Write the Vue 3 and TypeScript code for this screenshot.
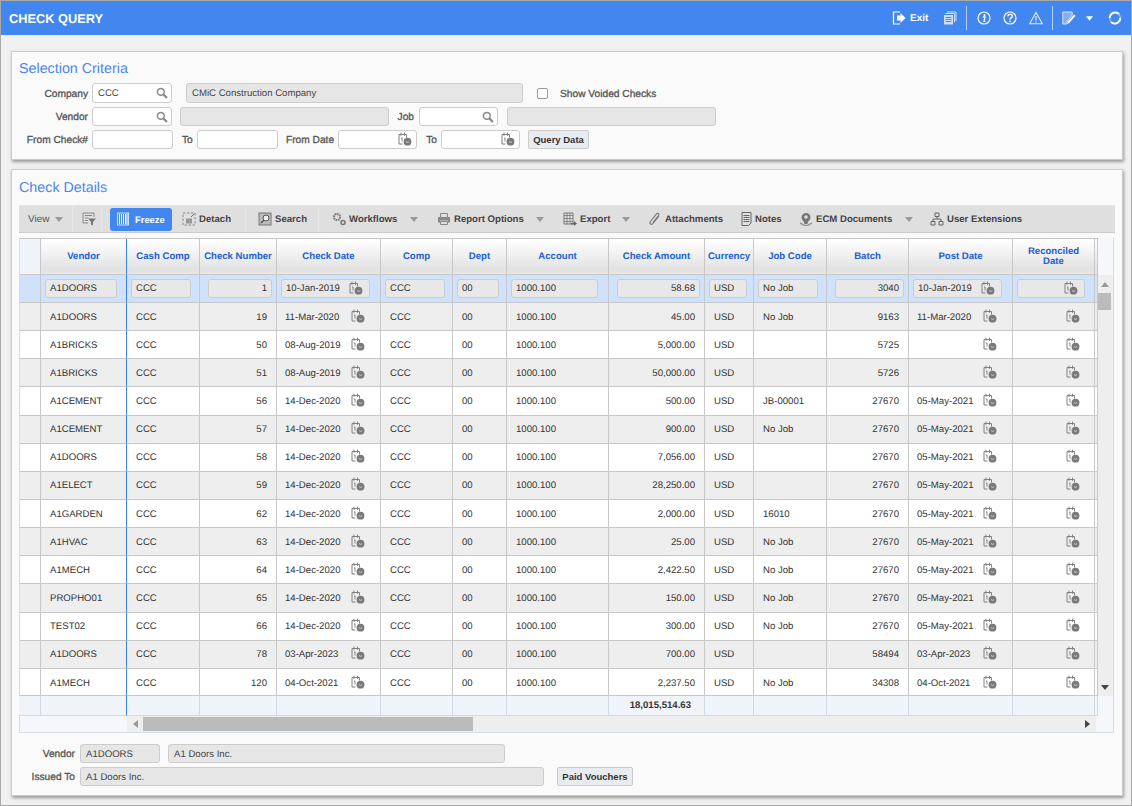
<script setup lang="ts">
interface Row {
  vendor: string
  num: string
  date: string
  amount: string
  job: string
  batch: string
  post: string
}

function mk(vendor: string, num: string, date: string, amount: string, job: string, batch: string, post: string): Row {
  return { vendor, num, date, amount, job, batch, post }
}

const D = '14-Dec-2020'
const P = '05-May-2021'
const first = mk('A1DOORS', '1', '10-Jan-2019', '58.68', 'No Job', '3040', '10-Jan-2019')
const rows: Row[] = [
  mk('A1DOORS', '19', '11-Mar-2020', '45.00', 'No Job', '9163', '11-Mar-2020'),
  mk('A1BRICKS', '50', '08-Aug-2019', '5,000.00', '', '5725', ''),
  mk('A1BRICKS', '51', '08-Aug-2019', '50,000.00', '', '5726', ''),
  mk('A1CEMENT', '56', D, '500.00', 'JB-00001', '27670', P),
  mk('A1CEMENT', '57', D, '900.00', 'No Job', '27670', P),
  mk('A1DOORS', '58', D, '7,056.00', '', '27670', P),
  mk('A1ELECT', '59', D, '28,250.00', '', '27670', P),
  mk('A1GARDEN', '62', D, '2,000.00', '16010', '27670', P),
  mk('A1HVAC', '63', D, '25.00', 'No Job', '27670', P),
  mk('A1MECH', '64', D, '2,422.50', 'No Job', '27670', P),
  mk('PROPHO01', '65', D, '150.00', 'No Job', '27670', P),
  mk('TEST02', '66', D, '300.00', 'No Job', '27670', P),
  mk('A1DOORS', '78', '03-Apr-2023', '700.00', '', '58494', '03-Apr-2023'),
  mk('A1MECH', '120', '04-Oct-2021', '2,237.50', 'No Job', '34308', '04-Oct-2021'),
]
const heads = ['Vendor', 'Cash Comp', 'Check Number', 'Check Date', 'Comp', 'Dept', 'Account', 'Check Amount', 'Currency', 'Job Code', 'Batch', 'Post Date']
const spacer = Array.from({ length: 15 }, (_, i) => i)
</script>

<template>
  <div class="page">
    <svg class="defs" width="0" height="0" aria-hidden="true">
      <symbol id="cal" viewBox="0 0 14 14">
        <path d="M1 2.500h7.500v3M1 2.500v9.500h3.500M3 .6v3.200M6.500 .6v3.200" fill="none" stroke="#808080" stroke-width="1"/>
        <path d="M3 6.400l1-.6v3.800" fill="none" stroke="#808080" stroke-width=".9"/>
        <circle cx="9.500" cy="9.700" r="3.900" fill="#7a7a7a"/>
        <path d="M8 9.500l1.600.9 1.500-.7" fill="none" stroke="#ddd" stroke-width=".8"/>
      </symbol>
      <symbol id="mag" viewBox="0 0 12 12">
        <circle cx="4.800" cy="4.800" r="3.400" fill="none" stroke="#8a8a8a" stroke-width="1.500"/>
        <path d="M7.400 7.400l3.600 3.600" stroke="#8a8a8a" stroke-width="2.200"/>
      </symbol>
      <symbol id="arrow" viewBox="0 0 8 5">
        <path d="M0 0h8L4 5z" fill="#999"/>
      </symbol>
    </svg>

    <header class="topbar">
      <span class="app-title">CHECK QUERY</span>
      <div class="top-actions">
        <svg class="ti" viewBox="0 0 14 14"><path d="M8 1H1.500v12H8" fill="none" stroke="#fff" stroke-width="1.200"/><path d="M5 4.500h3.500V2l5 5-5 5V9.500H5z" fill="#fff"/></svg>
        <span class="exit">Exit</span>
        <svg class="ti copy" viewBox="0 0 14 14"><path d="M4 1h9v9M2.500 2.500h9v9" fill="none" stroke="#cfe0fb" stroke-width="1"/><rect x="1" y="4" width="9" height="9.500" fill="#cfe0fb"/><path d="M2.500 6.500h6M2.500 8.500h6M2.500 10.500h6" stroke="#4287f0" stroke-width="1"/></svg>
        <i class="tsep first"></i>
        <svg class="ti info" viewBox="0 0 14 14"><circle cx="7" cy="7" r="6" fill="none" stroke="#fff" stroke-width="1.200"/><circle cx="7.500" cy="3.900" r="1" fill="#fff"/><path d="M5.800 6h2.200l-1 4.300h1.300" fill="none" stroke="#fff" stroke-width="1.300"/></svg>
        <svg class="ti help" viewBox="0 0 14 14"><circle cx="7" cy="7" r="6" fill="none" stroke="#fff" stroke-width="1.200"/><path d="M4.900 5.300c0-2.600 4.400-2.600 4.400-.1 0 1.700-2.300 1.700-2.300 3.300" fill="none" stroke="#fff" stroke-width="1.400"/><circle cx="7" cy="10.300" r=".9" fill="#fff"/></svg>
        <svg class="ti warn" viewBox="0 0 14 14"><path d="M7 1.500L13.300 12.800H.7z" fill="none" stroke="#e4eefc" stroke-width="1.100"/><path d="M7 5v4.500M7 10.300v1.300" stroke="#e4eefc" stroke-width="1.200"/></svg>
        <i class="tsep second"></i>
        <svg class="ti edit" viewBox="0 0 14 14"><path d="M.8 1h9.400v3L5 11v2H.8z" fill="#84aef4" stroke="#d5e4fb" stroke-width="1"/><path d="M5.500 13l.5-2.500 6-7 1.500 1.200-6 7z" fill="#fff"/></svg>
        <svg class="caret" viewBox="0 0 8 5"><path d="M0 0h8L4 5z" fill="#fff"/></svg>
        <svg class="ti sync" viewBox="0 0 14 14"><path d="M8.700 1.700A5.500 5.500 0 0 0 1.700 7M12.300 7a5.500 5.500 0 0 1-7 5.300M5.300 12.300A5.500 5.500 0 0 1 3 10.800M8.700 1.700A5.500 5.500 0 0 1 11 3.200" fill="none" stroke="#fff" stroke-width="2"/><path d="M12.300 7A5.500 5.500 0 0 0 11 3.300" fill="none" stroke="#a9c8f8" stroke-width="1.200"/><path d="M1.700 7A5.500 5.500 0 0 0 3 10.700" fill="none" stroke="#a9c8f8" stroke-width="1.200"/></svg>
      </div>
    </header>

    <main class="content">
      <section class="panel sel">
        <h2 class="ptitle">Selection Criteria</h2>
        <div class="frow tall">
          <label class="lb lead">Company</label>
          <div class="fld w80"><span>CCC</span><svg class="mag"><use href="#mag"/></svg></div>
          <div class="fld off w337 ml14"><span>CMiC Construction Company</span></div>
          <span class="check"></span>
          <label class="lb show">Show Voided Checks</label>
        </div>
        <div class="frow">
          <label class="lb lead">Vendor</label>
          <div class="fld w80"><span></span><svg class="mag"><use href="#mag"/></svg></div>
          <div class="fld off w209 ml8"></div>
          <label class="lb job">Job</label>
          <div class="fld w79 ml5"><span></span><svg class="mag"><use href="#mag"/></svg></div>
          <div class="fld off w209 ml9"></div>
        </div>
        <div class="frow">
          <label class="lb lead">From Check#</label>
          <div class="fld w81"></div>
          <label class="lb to1">To</label>
          <div class="fld w81 ml5"></div>
          <label class="lb fdate">From Date</label>
          <div class="fld w79 ml4"><span></span><svg class="cal"><use href="#cal"/></svg></div>
          <label class="lb to2">To</label>
          <div class="fld w79 ml4"><span></span><svg class="cal"><use href="#cal"/></svg></div>
          <button class="btn qd" type="button">Query Data</button>
        </div>
      </section>

      <section class="panel det">
        <h2 class="ptitle">Check Details</h2>
        <div class="toolbar">
          <div class="tb view">
            <span class="vtxt">View</span><svg class="tarrow"><use href="#arrow"/></svg>
          </div>
          <div class="tb filt">
            <svg class="tic" viewBox="0 0 14 14"><path d="M1 1h11v4M1 1v10h5M3 3.500h7M3 6h3M3 8.500h3" fill="none" stroke="#888"/><path d="M6 6.500h8l-3 3.500v3.500l-2-1V10z" fill="#777"/></svg>
          </div>
          <div class="freeze">
            <svg class="tic fz" viewBox="0 0 12 14"><rect x=".5" y="1" width="11" height="12" fill="none" stroke="#cfe0fb"/><path d="M2.500 2v10M4.500 2v10M6.500 2v10M8.500 2v10" stroke="#fff" stroke-width="1"/><path d="M10 1v12" stroke="#a9c8f8" stroke-width="2"/></svg>
            <span>Freeze</span>
          </div>
          <div class="tb detach">
            <svg class="tic" viewBox="0 0 14 14"><path d="M1 1h12v12H1z" fill="none" stroke="#888" stroke-dasharray="2.500 1.500"/><rect x="4" y="6.500" width="6" height="5" fill="#999"/><path d="M9 5l3-3" stroke="#777"/></svg>
            <span>Detach</span>
          </div>
          <div class="tb search">
            <svg class="tic" viewBox="0 0 14 14"><rect x="1" y="1" width="12" height="12" fill="#bbb" stroke="#777"/><circle cx="8" cy="6" r="3" fill="#eee" stroke="#555"/><path d="M5.800 8.200L3 11" stroke="#555" stroke-width="1.400"/></svg>
            <span>Search</span>
          </div>
          <div class="tb flow">
            <svg class="tic" viewBox="0 0 14 14"><circle cx="5" cy="5" r="3" fill="none" stroke="#777" stroke-width="2" stroke-dasharray="1.500 .8"/><circle cx="5" cy="5" r="3.800" fill="none" stroke="#999" stroke-width=".6"/><circle cx="11" cy="10.500" r="2" fill="none" stroke="#777" stroke-width="1.500"/></svg>
            <span>Workflows</span><svg class="tarrow wf"><use href="#arrow"/></svg>
          </div>
          <div class="tb report">
            <svg class="tic" viewBox="0 0 14 14"><path d="M3.500 5V1.500h7V5" fill="none" stroke="#888"/><path d="M1 5h12v5.500h-2V8.500H3v2H1z" fill="#888"/><path d="M3.500 9.500h7v3h-7z" fill="none" stroke="#888"/></svg>
            <span>Report Options</span><svg class="tarrow ro"><use href="#arrow"/></svg>
          </div>
          <div class="tb export">
            <svg class="tic" viewBox="0 0 14 14"><path d="M1 1h9v11H1z" fill="none" stroke="#777"/><path d="M1 3.500h9M4 1v11M7 1v11M1 6.500h9M1 9.500h9" stroke="#777" stroke-width=".8"/><path d="M8 11h3V9l3 2.500-3 2.500v-1.500H8z" fill="#666"/></svg>
            <span>Export</span><svg class="tarrow ex"><use href="#arrow"/></svg>
          </div>
          <div class="tb attach">
            <svg class="tic" viewBox="0 0 14 14"><path d="M11 4L5 11.500c-1.500 1.800-4 .2-2.800-1.800L8.500 1.800c1-1.200 3-.1 2.200 1.500L5 10.500" fill="none" stroke="#777" stroke-width="1.100"/></svg>
            <span>Attachments</span>
          </div>
          <div class="tb notes">
            <svg class="tic nt" viewBox="0 0 11 14"><path d="M1 .5h9v10.500l-2.500 2.500H1z" fill="none" stroke="#666"/><path d="M2.500 3.500h6M2.500 5.500h6M2.500 7.500h6M2.500 9.500h6" stroke="#666"/></svg>
            <span>Notes</span>
          </div>
          <div class="tb ecm">
            <svg class="tic" viewBox="0 0 14 14"><path d="M7 1a4.500 4.500 0 0 1 4.500 4.500C11.500 8 9 8.500 8.500 12h-3C5 8.500 2.500 8 2.500 5.500A4.500 4.500 0 0 1 7 1z" fill="#777"/><circle cx="7" cy="5" r="1.800" fill="#ddd"/><path d="M1 11l4.500 2.500h3L13 11" fill="none" stroke="#999" stroke-width="1.500"/></svg>
            <span>ECM Documents</span><svg class="tarrow em"><use href="#arrow"/></svg>
          </div>
          <div class="tb users">
            <svg class="tic" viewBox="0 0 14 14"><path d="M5 1h4v3.500H5zM1 9.500h4V13H1zM9 9.500h4V13H9z" fill="none" stroke="#666"/><path d="M7 4.500V7M3 9.500V7h8v2.500" fill="none" stroke="#666"/></svg>
            <span>User Extensions</span>
          </div>
        </div>

        <div class="table">
          <div class="grid-row head">
            <div class="c idx"></div>
            <div v-for="h in heads" :key="h" class="c hc">{{ h }}</div>
            <div class="c hc">Reconciled Date</div>
            <div class="c"></div>
          </div>

          <div class="body">
            <div class="rows">
              <div class="grid-row sel-row">
                <div class="c idx"></div>
                <div class="c"><div class="fi">{{ first.vendor }}</div></div>
                <div class="c"><div class="fi">CCC</div></div>
                <div class="c"><div class="fi num">{{ first.num }}</div></div>
                <div class="c"><div class="fi dt"><span>{{ first.date }}</span><svg class="cal"><use href="#cal"/></svg></div></div>
                <div class="c"><div class="fi">CCC</div></div>
                <div class="c"><div class="fi">00</div></div>
                <div class="c"><div class="fi">1000.100</div></div>
                <div class="c"><div class="fi num">{{ first.amount }}</div></div>
                <div class="c"><div class="fi">USD</div></div>
                <div class="c"><div class="fi">{{ first.job }}</div></div>
                <div class="c"><div class="fi num">{{ first.batch }}</div></div>
                <div class="c"><div class="fi dt"><span>{{ first.post }}</span><svg class="cal"><use href="#cal"/></svg></div></div>
                <div class="c"><div class="fi dt"><span></span><svg class="cal"><use href="#cal"/></svg></div></div>
                <div class="c"></div>
              </div>
              <div v-for="(r, i) in rows" :key="r.num" class="grid-row data" :class="{ alt: i % 2 === 0 }">
                <div class="c idx"></div>
                <div class="c txt">{{ r.vendor }}</div>
                <div class="c txt">CCC</div>
                <div class="c txt right">{{ r.num }}</div>
                <div class="c txt dc"><span>{{ r.date }}</span><svg class="cal"><use href="#cal"/></svg></div>
                <div class="c txt">CCC</div>
                <div class="c txt">00</div>
                <div class="c txt">1000.100</div>
                <div class="c txt right">{{ r.amount }}</div>
                <div class="c txt">USD</div>
                <div class="c txt">{{ r.job }}</div>
                <div class="c txt right">{{ r.batch }}</div>
                <div class="c txt dc"><span>{{ r.post }}</span><svg class="cal"><use href="#cal"/></svg></div>
                <div class="c txt dc"><span></span><svg class="cal"><use href="#cal"/></svg></div>
                <div class="c"></div>
              </div>
            </div>
            <div class="vscroll">
              <svg class="va" viewBox="0 0 8 5"><path d="M0 5h8L4 0z" fill="#999"/></svg>
              <div class="vthumb"></div>
              <svg class="vb" viewBox="0 0 8 5"><path d="M0 0h8L4 5z" fill="#444"/></svg>
            </div>
          </div>

          <div class="grid-row foot">
            <div v-for="n in spacer" :key="n" class="c fc" :class="{ total: n === 8 }">{{ n === 8 ? '18,015,514.63' : '' }}</div>
          </div>

          <div class="hscroll">
            <div class="hblank"></div>
            <div class="htrack">
              <svg class="ha" viewBox="0 0 5 8"><path d="M5 0v8L0 4z" fill="#999"/></svg>
              <div class="hthumb"></div>
              <svg class="hb" viewBox="0 0 5 8"><path d="M0 0v8l5-4z" fill="#444"/></svg>
            </div>
          </div>
        </div>

        <div class="frow bot bot1">
          <label class="lb blead">Vendor</label>
          <div class="fld off w80"><span>A1DOORS</span></div>
          <div class="fld off w337 ml8"><span>A1 Doors Inc.</span></div>
        </div>
        <div class="frow bot">
          <label class="lb blead">Issued To</label>
          <div class="fld off w464"><span>A1 Doors Inc.</span></div>
          <button class="btn pv" type="button">Paid Vouchers</button>
        </div>
      </section>
    </main>
  </div>
</template>

<style scoped>
.page {
  box-sizing: border-box;
  width: 1132px;
  height: 806px;
  border: 1px solid #a8a8a8;
  background: #f0f0f0;
  font-family: "Liberation Sans", Arial, sans-serif;
  font-size: 9.6px;
  text-rendering: geometricPrecision;
  color: #333;
  overflow: hidden;
}
.defs { position: absolute; }
.topbar {
  height: 34px;
  background: #4287f0;
  display: flex;
  align-items: center;
  padding-left: 8px;
  color: #fff;
}
.app-title { font-weight: bold; font-size: 12.8px; }
.top-actions { margin-left: auto; display: flex; align-items: center; padding-right: 9px; }
.ti { width: 14px; height: 14px; display: block; flex: none; }
.exit { font-weight: bold; font-size: 10px; margin-left: 4px; width: 19px; }
.copy { margin-left: 14px; }
.tsep { width: 1px; height: 24px; background: #b9d2f8; flex: none; }
.tsep.first { margin-left: 9px; }
.info { margin-left: 10px; }
.help { margin-left: 12px; }
.warn { margin-left: 12px; }
.tsep.second { margin-left: 9px; }
.edit { margin-left: 9px; }
.caret { width: 7px; height: 5px; margin-left: 10px; }
.sync { margin-left: 15px; }

.content { padding: 16px 0 0 10px; }
.panel {
  box-sizing: border-box;
  width: 1112px;
  background: #fafafa;
  border: 1px solid #ccc;
  box-shadow: 1px 2px 3px #999;
  padding: 7px 7px 0;
}
.sel { height: 109px; margin-bottom: 9px; }
.det { height: 627px; }
.ptitle {
  margin: 0 0 4px;
  height: 20px;
  line-height: 20px;
  font-size: 14.3px;
  font-weight: normal;
  color: #4a87ee;
}
.det .ptitle { margin-bottom: 7px; padding-top: 1px; }

.frow { display: flex; align-items: center; height: 19px; margin-bottom: 4px; }
.frow.tall { height: 20px; }
.lb {
  font-size: 10.2px;
  color: #555;
  -webkit-text-stroke: 0.3px #555;
  white-space: nowrap;
  flex: none;
  text-align: right;
  padding-top: 2px;
}
.lead { width: 69px; margin-right: 4px; }
.blead { width: 56px; margin-right: 5px; }
.show { margin-left: 12px; }
.job { margin-left: 8px; width: 17px; }
.to1 { margin-left: 9px; width: 10px; }
.fdate { margin-left: 8px; width: 48px; }
.to2 { margin-left: 9px; width: 11px; }
.fld {
  box-sizing: border-box;
  height: 100%;
  background: #fff;
  border: 1px solid #ccc;
  border-radius: 3px;
  display: flex;
  align-items: center;
  justify-content: space-between;
  padding: 0 3px 0 5px;
  flex: none;
  color: #444;
}
.fld.off { background: #e6e6e6; }
.bot .fld { padding-top: 2px; }
.w79 { width: 79px; }
.w80 { width: 80px; }
.w81 { width: 81px; }
.w209 { width: 209px; }
.w337 { width: 337px; }
.w464 { width: 464px; }
.ml4 { margin-left: 4px; }
.ml5 { margin-left: 5px; }
.ml8 { margin-left: 8px; }
.ml9 { margin-left: 9px; }
.ml14 { margin-left: 14px; }
.mag { width: 12px; height: 12px; flex: none; }
.cal { width: 14px; height: 14px; flex: none; }
.fld .cal { margin-right: 1px; margin-bottom: 1px; }
.check {
  box-sizing: border-box;
  width: 11px;
  height: 11px;
  margin-left: 14px;
  background: #fff;
  border: 1px solid #999;
  border-radius: 2px;
}
.btn {
  box-sizing: border-box;
  height: 19px;
  padding: 0;
  font: bold 9.5px "Liberation Sans", Arial, sans-serif;
  color: #333;
  background: #e8ebef;
  border: 1px solid #ccc;
  border-radius: 2px;
}
.qd { width: 61px; margin-left: 8px; }
.pv { width: 76px; margin-left: 13px; }

.toolbar {
  height: 28px;
  box-sizing: border-box;
  background: #dfdfdf;
  border-top: 1px solid #dbe6f5;
  border-bottom: 1px solid #ccc;
  margin-bottom: 5px;
  display: grid;
  grid-template-columns: 53px 30px 8px 62px 73px 73px 107px 126px 87px 95px 57px 130px 110px;
  align-items: center;
  font-weight: bold;
  color: #444;
}
.tb { display: flex; align-items: center; height: 100%; white-space: nowrap; }
.view { padding-left: 9px; grid-column: 1; font-weight: normal; color: #555; font-size: 10px; }
.vtxt { margin-right: 5px; }
.filt { grid-column: 2; padding-left: 9px; border-left: 1px solid #e6e6e6; border-right: 1px solid #e6e6e6; box-sizing: border-box; }
.freeze {
  grid-column: 4;
  height: 23px;
  background: #4287f0;
  color: #fff;
  border-radius: 3px;
  display: flex;
  align-items: center;
  padding-left: 7px;
  gap: 3px;
  font-size: 9.4px;
}
.tic { width: 14px; height: 14px; flex: none; margin-right: 3px; }
.tic.nt { width: 11px; }
.tic.fz { width: 12px; }
.detach { padding-left: 10px; }
.search { padding-left: 12px; border-left: 1px solid #e6e6e6; }
.flow { padding-left: 13px; border-left: 1px solid #e6e6e6; }
.report { padding-left: 12px; }
.export { padding-left: 12px; }
.attach { padding-left: 10px; }
.notes { padding-left: 8px; }
.ecm { padding-left: 9px; }
.users { padding-left: 10px; }
.tarrow { width: 8px; height: 5px; flex: none; }
.wf { margin-left: 13px; }
.ro { margin-left: 12px; }
.ex { margin-left: 12px; }
.em { margin-left: 13px; }

.table {
  box-sizing: border-box;
  width: 1095px;
  height: 495px;
  border-right: 1px solid #d5dde5;
  border-bottom: 1px solid #d5dde5;
  margin-bottom: 11px;
  background: #f5f7fa;
}
.grid-row {
  display: grid;
  grid-template-columns: 22px 86px 73px 77px 104px 72px 54px 102px 96px 49px 73px 82px 104px 82px 3px;
  width: 1079px;
}
.c {
  box-sizing: border-box;
  border-right: 1px solid #c8c8c8;
  border-bottom: 1px solid #c8c8c8;
  min-width: 0;
  display: flex;
  align-items: center;
}
.c:nth-child(2) { border-right-color: #3b82f0; }
.idx { border-left: 1px solid #d5dde5; }
.head { height: 37px; background: linear-gradient(#fff, #e2e2e2 85%, #e8e8e8); border-top: 1px solid #c8c8c8; box-sizing: border-box; }
.head .idx { background: #f0f3f7; }
.hc {
  justify-content: center;
  text-align: center;
  font-weight: bold;
  color: #1a5fd0;
  line-height: 10px;
  padding: 1px 2px 0;
  white-space: normal;
}
.hc:nth-child(4) { white-space: nowrap; padding: 1px 0 0; }
.hc:nth-child(10) { white-space: nowrap; padding: 1px 0 0; }
.hc:nth-child(14) { padding: 1px 14px 0; }
.body { display: flex; height: 421px; }
.rows {
  width: 1079px;
  display: grid;
  grid-template-rows: 28px repeat(13, 28.15px) 27px;
  flex: none;
}
.sel-row { background: #d0e1fb; }
.data { background: #fff; }
.data.alt { background: #eee; }
.txt { padding: 1px 9px 0 9px; white-space: nowrap; color: #333; }
.data:last-child .txt { padding-top: 3px; }
.right { justify-content: flex-end; }
.dc { justify-content: space-between; padding-left: 8px; }
.dc .cal { margin-right: 6px; margin-bottom: 3px; }
.dc:nth-child(14) .cal { margin-right: 5px; }
.fi {
  box-sizing: border-box;
  flex: 1;
  height: 19px;
  margin: 0 8px 0 4px;
  background: #e8e8e8;
  border: 1px solid #ccc;
  border-radius: 3px;
  padding: 0 4px;
  display: flex;
  align-items: center;
  white-space: nowrap;
  color: #333;
}
.sel-row .c:nth-child(2) .fi { margin-right: 9px; }
.sel-row .c:nth-child(6) .fi,
.sel-row .c:nth-child(7) .fi { margin-right: 7px; }
.sel-row .c:nth-child(8) .fi { margin-right: 10px; }
.sel-row .c:nth-child(10) .fi { margin-right: 6px; }
.fi.num { justify-content: flex-end; margin: 0 4px 0 8px; }
.fi.dt { justify-content: space-between; margin-right: 10px; }
.sel-row .c:nth-child(14) .fi { margin-right: 9px; }
.fi.dt .cal { margin-right: 2px; margin-bottom: 2px; }
.vscroll {
  flex: none;
  width: 15px;
  background: #eee;
  position: relative;
}
.va, .vb { position: absolute; left: 3px; width: 8px; height: 5px; }
.va { top: 7px; }
.vb { bottom: 6px; }
.vthumb { position: absolute; top: 18px; left: 0; width: 13px; height: 17px; background: #bbb; }
.foot { height: 20px; background: #f0f3f7; }
.fc { border-color: #d0dae2; }
.fc:nth-child(2) { border-right-color: #3b82f0; }
.fc.total { font-weight: bold; justify-content: flex-end; padding-right: 13px; color: #333; white-space: nowrap; }
.hscroll { display: flex; height: 16px; }
.hblank { width: 108px; box-sizing: border-box; border-left: 1px solid #d5dde5; flex: none; }
.htrack { width: 969px; background: #eee; position: relative; flex: none; }
.ha, .hb { position: absolute; top: 4px; width: 5px; height: 8px; }
.ha { left: 6px; }
.hb { right: 6px; }
.hthumb { position: absolute; left: 16px; top: 1px; width: 330px; height: 14px; background: #bbb; }
</style>

<style>
html, body { margin: 0; background: #f0f0f0; }
</style>
